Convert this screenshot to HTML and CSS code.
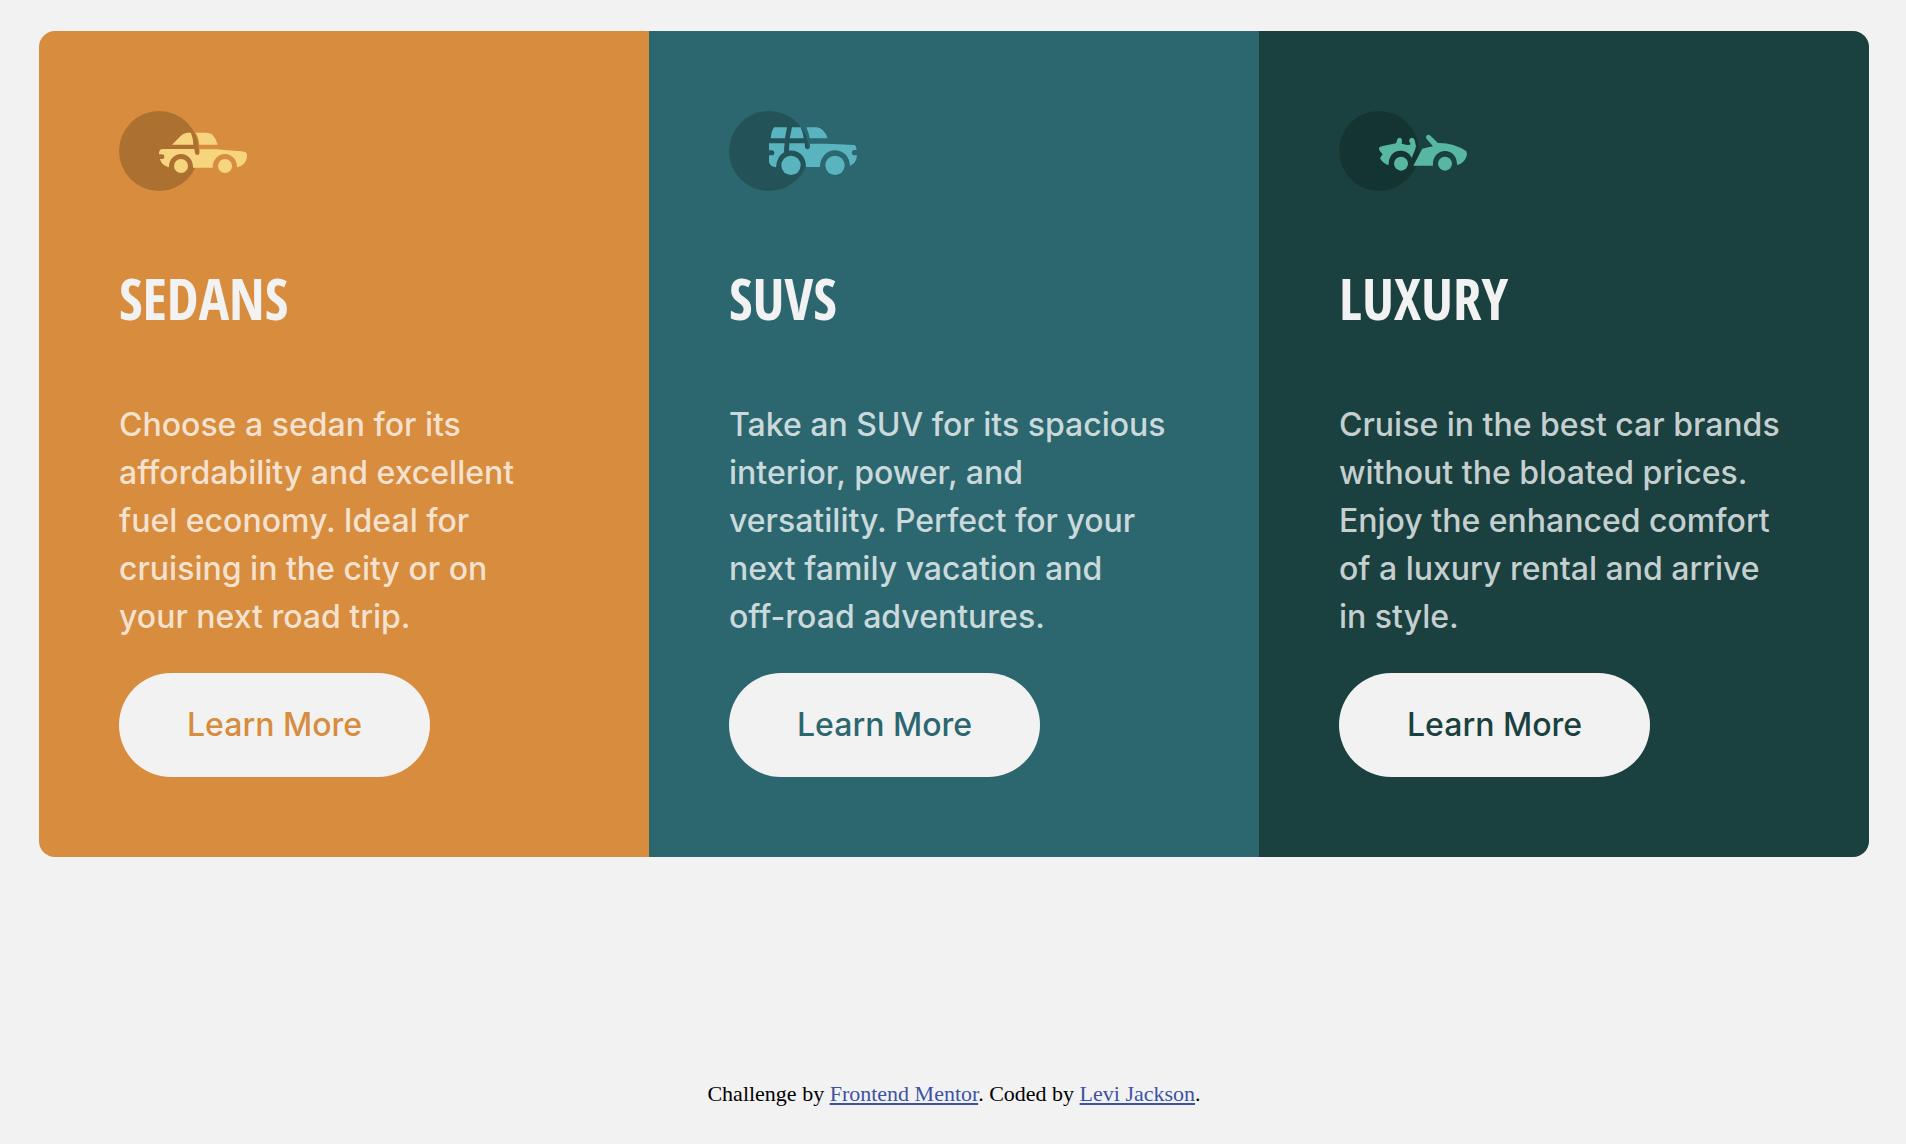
FILE: index.html
```html
<!DOCTYPE html>
<html lang="en">
<head>
  <meta charset="utf-8">
  <meta name="viewport" content="width=device-width, initial-scale=1">
  <title>3-column preview card</title>
  <link rel="stylesheet" href="styles.css">
</head>
<body>
  <main class="cards">
    <section class="card card-sedans">
      <svg class="icon" viewBox="27 33 384 240" aria-hidden="true">
        <circle class="disc" cx="147" cy="153" r="120"/>
        <path d="M186 134L212 108Q220 99 232 98.500H242Q249 112 250 134ZM257 98.500H288Q300 98.500 306 103Q318 115 323 134H268Q266 112 257 98.500Z"/>
        <path d="M158 147H253L255 158Q256 165 262 165Q269 165 269 158V148H320L372 152Q398 153 406 156Q412 160 411 168Q410 184 400 193Q393 201 381 202C382 180 366 162 345 162C324 162 308 180 308 203H249C250 180 234 162 213 162C192 162 176 180 177 202Q165 199 158 192Q152 185 150 177H155Q163 177 163 170Q163 163 155 163H147Q146 147 158 147Z"/>
        <circle cx="213" cy="198" r="21"/>
        <circle cx="345" cy="198" r="21"/>
      </svg>
      <h2 class="title">SEDANS</h2>
      <p class="text">Choose a sedan for its affordability and excellent fuel economy. Ideal for cruising in the city or on<br> your next road trip.</p>
      <button class="button" type="button">Learn More</button>
    </section>
    <section class="card card-suvs">
      <svg class="icon" viewBox="27 33 384 240" aria-hidden="true">
        <circle class="disc" cx="147" cy="153" r="120"/>
        <path d="M163 82H201L195 115H152Q155 88 163 82ZM216 82H242Q249 98 251 115H209ZM259 82H290Q312 84 323 115H269Q266 97 259 82Z"/>
        <path d="M147 130H194Q192 145 192 157Q170 170 168 202Q150 200 147 186V166H155Q163 166 163 159Q163 151 155 151H147Z"/>
        <path d="M208 130H254L255 142Q257 148 263 148Q270 147 270 141V131H320L404 135Q409 138 410 150H402Q395 151 395 158Q396 166 403 166H411Q410 188 390 198C389 170 370 151 345 151C320 151 300 172 300 201H258C258 170 238 149 207 152Z"/>
        <circle cx="213" cy="196" r="29"/>
        <circle cx="345" cy="196" r="29"/>
      </svg>
      <h2 class="title">SUVS</h2>
      <p class="text">Take an SUV for its spacious interior, power, and versatility. Perfect for your next family vacation and <span class="keep">off-road</span> adventures.</p>
      <button class="button" type="button">Learn More</button>
    </section>
    <section class="card card-luxury">
      <svg class="icon" viewBox="27 33 384 240" aria-hidden="true">
        <circle class="disc" cx="147" cy="153" r="120"/>
        <path d="M147 148Q146 141 155 139L198 130Q200 127 201 120Q203 113 210 113Q217 115 216 122L215 131L231 135L241 134Q243 130 238 125Q236 114 246 113Q254 114 255 125Q260 138 256 147L245 174C240 160 227 152 211 152C190 152 175 170 176 195Q160 192 150 175L158 162Q150 156 147 148Z"/>
        <path d="M250 197L277 146Q290 143 309 139L290 117Q285 108 293 105Q297 103 302 108L324 129Q370 128 408 153Q413 160 409 170Q402 190 381 195C382 170 366 153 345 153C323 153 307 172 309 197Z"/>
        <circle cx="213" cy="191" r="21"/>
        <circle cx="345" cy="191" r="21"/>
      </svg>
      <h2 class="title">LUXURY</h2>
      <p class="text">Cruise in the best car brands without the bloated prices. Enjoy the enhanced comfort of a luxury rental and arrive in style.</p>
      <button class="button" type="button">Learn More</button>
    </section>
  </main>
  <footer class="attribution">
    Challenge by <a href="https://www.frontendmentor.io">Frontend Mentor</a>. Coded by <a href="#">Levi Jackson</a>.
  </footer>
</body>
</html>
```
FILE: styles.css
```css
* {
  box-sizing: border-box;
}

body {
  margin: 0;
  min-height: 100vh;
  padding: 31px 37px 36px 39px;
  display: flex;
  flex-direction: column;
  justify-content: space-between;
  background: #f2f2f2;
  font-family: Inter, "Noto Sans", sans-serif;
}

.cards {
  display: grid;
  grid-template-columns: repeat(3, 1fr);
  border-radius: 16px;
  overflow: hidden;
}

.card {
  padding: 80px;
  display: flex;
  flex-direction: column;
  align-items: flex-start;
  background: var(--tone);
}

.card-sedans {
  --tone: #d78c3e;
  --car: #f7d57e;
}

.card-suvs {
  --tone: #2c676f;
  --car: #5ab4c0;
}

.card-luxury {
  --tone: #1a413f;
  --car: #58b7a0;
}

.icon {
  width: 128px;
  height: 80px;
  fill: var(--car);
}

.disc {
  fill: #000;
  fill-opacity: 0.2;
}

.title {
  margin: 64px 0 60px;
  color: #f2f2f2;
  font-family: "Open Sans Condensed", "Roboto Condensed", sans-serif;
  font-size: 57px;
  font-weight: 700;
  line-height: 86px;
}

.text {
  margin: 0 0 32px;
  color: rgba(255, 255, 255, 0.75);
  font-size: 32px;
  font-weight: 500;
  line-height: 48px;
}

.keep {
  white-space: nowrap;
}

.button {
  padding: 28px 68px;
  border: 0;
  border-radius: 52px;
  background: #f2f2f2;
  color: var(--tone);
  font-family: inherit;
  font-size: 32px;
  font-weight: 500;
  line-height: 48px;
  cursor: pointer;
}

.attribution {
  color: #000;
  font-family: "Liberation Serif", serif;
  font-size: 22px;
  line-height: 28px;
  text-align: center;
}

.attribution a {
  color: #3e52a3;
}
```
